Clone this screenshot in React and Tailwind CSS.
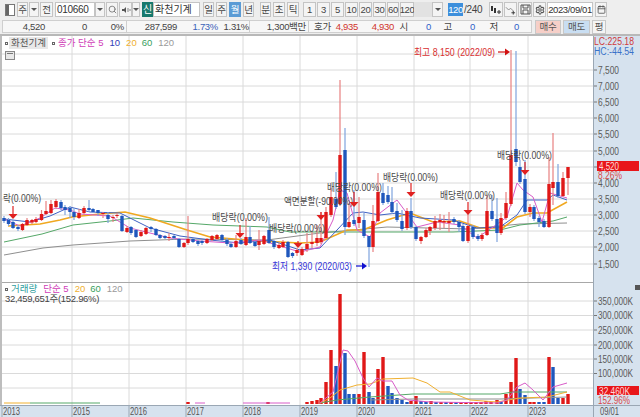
import { Search, Settings, Calendar } from "lucide-react";

const font = { fontFamily: '"Liberation Sans","Noto Sans CJK KR",sans-serif' };

// candles: x, color, wick top, body top, body bottom, wick bottom (page pixels)
const candles = [
  [4, "b", 216, 218, 221, 223], [8.5, "b", 218, 220, 224, 226], [13, "b", 220, 222, 228, 229], [18, "b", 225, 227, 229, 231],
  [22.5, "r", 223, 224, 230, 231], [27, "r", 218, 220, 225, 226], [32, "r", 219, 220, 222.5, 224], [36, "r", 217, 219, 222, 223],
  [41.5, "r", 210, 214, 220, 221], [46, "r", 201, 211, 214, 215], [51, "r", 200, 204, 213, 214], [56, "r", 199, 201, 207, 209],
  [61, "b", 200, 202, 208, 210], [65, "b", 205, 207, 210, 215], [70, "b", 206, 208, 212, 218], [74, "b", 208, 212, 217, 220],
  [79, "r", 209, 213, 218, 219], [84, "r", 206, 208, 213, 215], [89, "b", 200, 208, 210, 212], [93, "b", 208, 209, 212, 213],
  [98, "b", 210, 210, 213, 216], [103, "r", 212, 213, 214, 218], [108, "b", 212, 215, 219, 223], [113, "r", 215, 217, 218, 222],
  [117, "r", 213, 215, 216, 218], [122, "b", 215, 216, 231, 232], [127, "r", 226, 228, 232, 233], [131, "b", 226, 227, 233, 235],
  [136, "b", 229, 230, 237, 238], [141, "r", 230, 232, 236, 237], [146, "r", 227, 228, 234, 235], [151, "b", 226, 227, 229, 232],
  [156, "b", 228, 229, 235, 236], [160, "b", 234, 235, 238, 239], [165, "b", 235, 236, 238, 239], [169, "r", 233, 237, 238, 241],
  [174, "b", 235, 236, 238, 240], [179, "b", 238, 239, 247, 248], [184, "r", 242, 243, 247, 248], [188, "r", 216, 239, 243, 245],
  [193, "b", 238, 239, 242, 243], [198, "b", 240, 241, 244, 246], [202, "b", 240, 241, 243, 245], [207, "r", 238, 239, 243, 244],
  [212, "r", 235, 236, 240, 241], [217, "r", 234, 235, 239, 240], [222, "b", 234, 235, 240, 242], [227, "b", 238, 240, 244, 246],
  [231, "b", 242, 244, 247, 248], [236, "r", 235, 241, 247, 248], [241, "b", 238, 240, 244, 245], [246, "r", 218, 237, 245, 246],
  [250, "b", 226, 237, 243, 244], [255, "b", 241, 242, 246, 247], [259, "r", 230, 241, 245, 250], [264, "r", 235, 236, 244, 245],
  [269, "b", 217, 230, 243, 244], [274, "b", 240, 241, 247, 249], [279, "r", 243, 245, 248, 249], [283, "r", 240, 242, 247, 248],
  [288, "b", 241, 242, 257, 258], [292.5, "b", 252, 253, 256, 258], [297, "r", 248, 250, 253, 256], [302, "r", 247, 249, 255, 256],
  [307, "r", 233, 244, 249, 252], [312, "r", 232, 242, 244, 248], [317, "r", 225, 238, 243, 246], [321, "r", 212, 238, 242, 244],
  [326, "r", 207, 212, 238, 239], [331, "r", 188, 197, 215, 217], [336, "b", 172, 199, 207, 209], [340, "r", 80, 155, 204, 206],
  [345, "b", 128, 150, 227, 235], [349, "r", 203, 222, 227, 228], [354, "b", 190, 220, 224, 226], [359, "r", 197, 217, 223, 228],
  [364, "b", 213, 220, 236, 238], [369, "b", 236, 236, 247, 267], [373, "r", 205, 221, 247, 252], [378, "r", 173, 192, 221, 222],
  [383, "b", 183, 193, 203, 205], [388, "b", 186, 195, 202, 204], [392, "b", 187, 202, 212, 214], [397, "b", 203, 211, 220, 222],
  [402, "b", 210, 221, 229, 231], [407, "r", 208, 211, 228, 230], [411, "b", 198, 211, 227, 229], [416, "b", 226, 227, 239, 241],
  [421, "r", 236, 237, 241, 244], [426, "r", 228, 230, 237, 238], [430, "r", 226, 227, 231, 235], [435, "r", 216, 221, 228, 230],
  [440, "r", 214, 220, 222, 230], [444, "r", 215, 221, 222.5, 228], [449, "r", 212, 221, 223, 232], [454, "b", 217, 219, 222, 224],
  [459, "b", 220, 222, 227, 232], [463, "b", 224, 226, 241, 242], [468, "r", 214, 226, 241, 243], [473, "b", 225, 227, 237, 239],
  [478, "b", 234, 236, 239, 241], [482, "r", 233, 235, 239, 241], [487, "r", 195, 211, 235, 236], [492, "b", 195, 211, 219, 221],
  [497, "b", 198, 219, 233, 242], [501, "r", 213, 218, 233, 235], [506, "r", 192, 203, 218, 220], [511, "r", 50, 155, 204, 206],
  [516, "b", 51, 149, 162, 166], [520, "b", 160, 167, 182, 184], [525, "b", 160, 179, 212, 214], [530, "r", 204, 207, 212, 217],
  [534, "b", 205, 207, 219, 221], [539, "b", 216, 218, 222, 227], [544, "b", 219, 221, 227, 228], [549, "r", 157, 184, 227, 228],
  [553, "r", 133, 182, 188, 205], [558, "b", 164, 182, 196, 198], [563, "r", 172, 178, 196, 197], [568, "r", 167, 167, 178, 195],
];

const lines = [
  { c: "#8f8f8f", p: "4,255 43,248 73,245 130,241 187,239 267,240 320,233 387,227 470,229 520,224 567,223" },
  { c: "#55a868", p: "4,242 42,234 73,225 110,221 133,218 173,222 213,225 267,227 290,232 320,232 387,232 453,232 500,230 520,225 553,221 567,217" },
  { c: "#f0a820", w: 1.6, p: "8,226 40,224 60,220 72,217 100,214 125,212 150,218 187,230 210,237 260,241 300,243 320,242 347,230 363,230 387,220 410,213 433,222 460,221 480,228 503,228 517,217 533,213 547,213 567,202" },
  { c: "#3f62c4", p: "4,219 30,222 50,216 70,207 90,212 120,213 150,228 180,236 210,240 240,243 270,240 300,250 320,248 337,230 353,213 363,212 380,215 397,213 420,218 453,220 477,228 500,227 517,215 527,200 547,200 553,195 567,200" },
  { c: "#d85cc8", p: "4,219 20,226 40,218 55,208 70,210 80,214 110,216 130,228 150,233 170,238 200,241 230,243 260,240 300,252 320,247 333,220 340,190 347,193 357,230 370,237 380,213 397,200 417,227 437,222 460,225 477,238 493,227 507,217 517,183 523,190 533,197 542,222 550,193 567,198" },
];

// volume bars: x, color, bar top
const volume = [
  [188, "r", 402], [268, "r", 402], [307, "r", 402], [312, "r", 401], [317, "r", 400], [321, "r", 398],
  [326, "r", 382], [331, "r", 350], [336, "b", 366], [340, "r", 294], [345, "b", 353], [349, "b", 394], [354, "b", 394],
  [359, "r", 394], [364, "r", 352], [369, "b", 392], [373, "b", 398], [378, "r", 369], [383, "r", 357], [388, "b", 386],
  [392, "b", 393], [397, "b", 398], [402, "b", 400], [407, "b", 402], [411, "r", 401], [416, "r", 396], [421, "b", 401],
  [426, "b", 402], [431, "r", 401], [436, "b", 402], [441, "r", 402], [446, "b", 402], [451, "r", 402], [456, "b", 402],
  [461, "r", 402], [466, "r", 402], [471, "r", 402], [476, "r", 402], [481, "r", 402], [486, "r", 401], [491, "r", 402],
  [497, "r", 400], [501, "b", 402], [506, "r", 394], [511, "r", 382], [516, "r", 358], [520, "b", 389], [525, "b", 395],
  [530, "r", 402], [534, "r", 402], [539, "b", 402], [544, "b", 402], [549, "r", 357], [553, "b", 367], [558, "b", 398],
  [563, "r", 398], [568, "r", 394],
];

const volLines = [
  { c: "#8f8f8f", p: "370,400 413,399 500,399 567,397" },
  { c: "#55a868", p: "320,403 337,400 370,397 413,394 500,394 513,392 567,392" },
  { c: "#55a868", p: "30,403 100,403" },
  { c: "#f0b030", p: "320,403 330,398 340,390 357,385 370,384 383,379 413,378 427,383 440,392 450,392 470,400 497,402 520,398 547,397 567,392" },
  { c: "#f0b030", p: "4,403 30,403" },
  { c: "#d85cc8", p: "320,403 333,392 343,350 348,351 355,361 363,378 369,387 377,378 383,381 392,381 400,395 408,400 430,402 497,403 507,400 517,387 525,383 533,390 543,400 553,387 567,383" },
  { c: "#d85cc8", p: "195,403 205,403" },
  { c: "#d85cc8", p: "243,403 290,403" },
];

const years = [[72, "2015"], [129, "2016"], [186, "2017"], [243, "2018"], [300, "2019"], [357, "2020"], [414, "2021"], [470, "2022"], [528, "2023"]];
const priceTicks = ["7,500", "7,000", "6,500", "6,000", "5,500", "5,000", "4,500", "4,000", "3,500", "3,000", "2,500", "2,000", "1,500"];
const priceY = [70, 86, 102, 118, 134, 151, 167, 183, 199, 215, 231, 247, 264];
const volTicks = [[301, "350,000K"], [315.5, "300,000K"], [330, "250,000K"], [345, "200,000K"], [359, "150,000K"], [373.5, "100,000K"]];
const volGrid = [301, 315.5, 330, 345, 359, 373.5, 388];

const arrows = [[13, 206, 219], [240, 225, 238], [298, 241, 248], [321, 212, 220], [354, 192, 207], [411, 183, 197], [468, 202, 215], [525, 162, 175]];
const divLabels = [
  [212, 221, 56], [269, 232, 56], [327, 191, 55], [383, 181, 55], [440, 199, 55], [497, 159, 55],
];

function Txt({ x, y, w, c = "#4a4a4a", size = 10, children }) {
  return (
    <text x={x} y={y} fill={c} fontSize={size} textLength={w} lengthAdjust="spacingAndGlyphs" style={font}>
      {children}
    </text>
  );
}

function Btn({ w, active, children }) {
  return (
    <div className={`${w} h-[15px] shrink-0 flex items-center justify-center border whitespace-nowrap text-[9.5px] tracking-[-0.4px] leading-none ${active ? "border-[#5b9bd5] bg-[#5b9bd5] text-white" : "border-[#c4c4c4] bg-[#f4f4f4] text-[#444]"}`}>
      {children}
    </div>
  );
}

function Drop({ w = "w-[10px]" }) {
  return (
    <div className={`${w} h-[15px] shrink-0 flex items-center justify-center border border-[#c4c4c4] bg-[#f4f4f4]`}>
      <div className="w-0 h-0 border-x-[3px] border-x-transparent border-t-[3px] border-t-[#555]" />
    </div>
  );
}

function Toolbar() {
  return (
    <div className="h-[19px] shrink-0 flex items-center pl-[5px] bg-[#eeeeee] overflow-hidden" style={font}>
      <div className="w-[10px] h-[12px] mr-[2px] shrink-0 border border-[#777] bg-white flex">
        <div className="w-[3px] bg-[#666]" />
      </div>
      <div className="flex gap-[1px] mr-[2px]">
        <Btn w="w-[11px]">주</Btn>
        <Drop />
        <Btn w="w-[13px]">전</Btn>
      </div>
      <div className="w-[40px] h-[15px] shrink-0 border border-[#c4c4c4] bg-white text-[10px] tracking-[-0.3px] leading-[13px] pl-[1px] text-[#333]">010660</div>
      <Drop />
      <div className="w-[12px] h-[15px] ml-[1px] shrink-0 flex items-center justify-center border border-[#c4c4c4] bg-[#f4f4f4]">
        <Search size={9} color="#666" strokeWidth={2} />
      </div>
      <div className="w-[13px] h-[15px] ml-[1px] shrink-0 flex items-center justify-center border border-[#c4c4c4] bg-[#f4f4f4]">
        <svg width="10" height="10" viewBox="0 0 10 10">
          <path d="M1 4h2l2-2v6L3 6H1z" fill="#555" />
          <path d="M7 3v4M9 4v2" stroke="#888" />
        </svg>
      </div>
      <Drop w="w-[8px]" />
      <div className="w-[11px] h-[15px] ml-[2px] shrink-0 bg-[#17796d] text-white text-[10px] leading-[15px] text-center">신</div>
      <div className="w-[47px] h-[15px] shrink-0 border border-[#c4c4c4] bg-white text-[10px] leading-[13px] pl-[1px] text-[#333] whitespace-nowrap">화천기계</div>
      <div className="flex gap-[2px] ml-[3px]">
        <Btn w="w-[11px]">일</Btn>
        <Btn w="w-[11px]">주</Btn>
        <Btn w="w-[12px]" active>월</Btn>
        <Btn w="w-[11px]">년</Btn>
      </div>
      <div className="flex gap-[2px] ml-[6px]">
        <Btn w="w-[11px]">분</Btn>
        <Btn w="w-[12px]">초</Btn>
        <Btn w="w-[12px]">틱</Btn>
      </div>
      <div className="flex gap-[1px] ml-[4px]">
        <Btn w="w-[13px]">1</Btn>
        <Btn w="w-[13px]">3</Btn>
        <Btn w="w-[13px]">5</Btn>
        <Btn w="w-[13px]">10</Btn>
        <Btn w="w-[13px]">20</Btn>
        <Btn w="w-[13px]">30</Btn>
        <Btn w="w-[12px]">60</Btn>
        <Btn w="w-[14px]">120</Btn>
      </div>
      <div className="w-[18px] h-[15px] shrink-0 bg-[#e2e2e2]" />
      <Drop w="w-[11px]" />
      <div className="w-[15px] h-[13px] ml-[5px] shrink-0 bg-[#3d8fdc] text-white text-[9.5px] tracking-[-0.4px] leading-[13px] text-center">120</div>
      <div className="w-[25px] ml-[1px] shrink-0 text-[10px] tracking-[-0.3px] text-[#444]">/240</div>
      <div className="flex gap-[1px]">
        <Btn w="w-[14px]"><svg width="12" height="10" viewBox="0 0 12 10"><path d="M2 1v5M5 3v5" stroke="#333" strokeWidth="2" /><path d="M9 5v4M7 7h4" stroke="#333" /></svg></Btn>
        <Btn w="w-[13px]"><svg width="12" height="10" viewBox="0 0 12 10"><path d="M1 2l3 3 2-2 3 3" stroke="#888" fill="none" /><path d="M9 6v4M7 8h4" stroke="#333" /></svg></Btn>
        <Btn w="w-[14px]"><svg width="11" height="11" viewBox="0 0 11 11"><path d="M1 1h9v9H1zM3 1v3h5V1M3 10V6h5v4" stroke="#555" fill="none" /></svg></Btn>
        <Btn w="w-[13px]"><Settings size={10} color="#555" strokeWidth={2.5} /></Btn>
      </div>
      <div className="w-[46px] h-[15px] ml-[1px] shrink-0 border border-[#c4c4c4] bg-white text-[9.5px] tracking-[-0.4px] whitespace-nowrap leading-[13px] text-center text-[#333]">2023/09/01</div>
      <div className="w-[12px] h-[15px] ml-[2px] shrink-0 flex items-center justify-center border border-[#c4c4c4] bg-[#f4f4f4]">
        <Calendar size={9} color="#444" strokeWidth={2} />
      </div>
    </div>
  );
}

function Cell({ w, color = "text-[#444]", align = "text-right", children }) {
  return <div className={`${w} shrink-0 whitespace-nowrap ${color} ${align}`}>{children}</div>;
}

function Quote() {
  return (
    <div className="h-[17px] shrink-0 flex items-center bg-[#eeeeee] border-b-2 border-b-[#b8b8b8] text-[9.5px] tracking-[-0.3px] leading-none" style={font}>
      <div className="ml-[2px] w-[530px] h-[13px] shrink-0 flex items-center bg-[#f7f7f7] border border-[#cfcfcf]">
        <Cell w="w-[42px]">4,520</Cell>
        <Cell w="w-[42px]">0</Cell>
        <Cell w="w-[40px] pr-[2px] h-full leading-[11px] border-r border-r-[#cfcfcf]">0%</Cell>
        <Cell w="w-[50px]">287,599</Cell>
        <Cell w="w-[41px]" color="text-[#3a62b8]">1.73%</Cell>
        <Cell w="w-[32px] h-full leading-[11px] border-r border-r-[#cfcfcf]">1.31%</Cell>
        <Cell w="w-[59px] pr-[2px] h-full leading-[11px] border-r border-r-[#cfcfcf]">1,300백만</Cell>
        <Cell w="w-[22px]">호가</Cell>
        <Cell w="w-[27px]" color="text-[#d0342c]">4,935</Cell>
        <Cell w="w-[36px]" color="text-[#d0342c]">4,930</Cell>
        <Cell w="w-[14px]">시</Cell>
        <Cell w="w-[23px]" color="text-[#2f62c8]">0</Cell>
        <Cell w="w-[21px]">고</Cell>
        <Cell w="w-[23px]" color="text-[#2f62c8]">0</Cell>
        <Cell w="w-[23px]">저</Cell>
        <Cell w="w-[21px]" color="text-[#2f62c8]">0</Cell>
      </div>
      <div className="ml-[3px] w-[26px] h-[14px] shrink-0 flex items-center justify-center bg-[#f6cfc8] text-[#555] border border-[#c8c8c8]">매수</div>
      <div className="ml-[2px] w-[27px] h-[14px] shrink-0 flex items-center justify-center bg-[#c9def2] text-[#555] border border-[#c8c8c8]">매도</div>
      <div className="ml-[2px] w-[14px] h-[14px] shrink-0 flex items-center justify-center bg-[#f4f4f4] text-[#555] border border-[#c8c8c8]">평</div>
    </div>
  );
}

function Grid({ ys, top, bottom }) {
  return (
    <g stroke="#dadada" strokeWidth="1">
      {ys.map((y) => <line key={y} x1="2" x2="593" y1={y} y2={y} />)}
      {years.map(([x]) => <line key={x} x1={x} x2={x} y1={top} y2={bottom} />)}
    </g>
  );
}

function PricePane() {
  return (
    <div className="h-[246px] shrink-0 flex relative" style={font}>
      <svg className="w-[593px] h-[246px] bg-white border-l-2 border-l-[#bdbdbd]" viewBox="2 36 591 246">
        <Grid ys={[54, ...priceY]} top={36} bottom={282} />
        {lines.map((l) => (
          <polyline key={l.c} points={l.p} fill="none" stroke={l.c} strokeWidth={l.w || 1} />
        ))}
        {candles.map(([x, k, wt, bt, bb, wb]) => (
          <g key={x}>
            <line x1={x} x2={x} y1={wt} y2={wb} stroke={k === "r" ? "#e88080" : "#7fa3de"} strokeWidth="1.2" />
            <rect x={x - 1.7} y={bt} width="3.4" height={bb - bt} fill={k === "r" ? "#e01818" : "#1f57bd"} />
          </g>
        ))}
        <Txt x={3} y={202} w={38}>락(0.00%)</Txt>
        {divLabels.map(([x, y, w]) => (
          <Txt key={x} x={x} y={y} w={w}>배당락(0.00%)</Txt>
        ))}
        <Txt x={284} y={205} w={69}>액면분할(-90.00%)</Txt>
        {arrows.map(([x, a, b]) => (
          <g key={x}>
            <line x1={x} x2={x} y1={a} y2={b - 3} stroke="#e02020" strokeWidth="1.2" />
            <path d={`M${x - 4.5} ${b - 5}h9l-4.5 5z`} fill="#e02020" />
          </g>
        ))}
        <Txt x={414} y={56} w={81} c="#d83030">최고 8,150 (2022/09)</Txt>
        <line x1="498" x2="506" y1="52" y2="52" stroke="#d01010" strokeWidth="1.2" />
        <path d="M505 48.5l5 3.5-5 3.5z" fill="#d01010" />
        <Txt x={272} y={270} w={80} c="#3636d8">최저 1,390 (2020/03)</Txt>
        <line x1="356" x2="363" y1="266" y2="266" stroke="#1010d0" strokeWidth="1.2" />
        <path d="M362 262.5l5 3.5-5 3.5z" fill="#1010d0" />
      </svg>
      <svg className="w-[47px] h-[246px] bg-[#d6e2ee]" viewBox="593 36 47 246">
        <line x1="593.5" x2="593.5" y1="36" y2="282" stroke="#9aa7b4" />
        {priceTicks.map((t, i) => (
          <g key={t}>
            <line x1="594" x2="597" y1={priceY[i]} y2={priceY[i]} stroke="#777" />
            {t !== "4,500" && <Txt x={598} y={priceY[i] + 3.5} w={21} c="#5a5a5a">{t}</Txt>}
          </g>
        ))}
        <Txt x={594} y={45} w={40} c="#d03a3a">LC:225.18</Txt>
        <Txt x={594} y={54.5} w={40} c="#3a72c8">HC:-44.54</Txt>
        <rect x="597" y="161" width="42" height="10" fill="#e8161a" />
        <Txt x={599} y={169.5} w={20} c="#ffd9d9">4,520</Txt>
        <Txt x={598} y={179} w={24} c="#d84a4a">8.26%</Txt>
      </svg>
      <div className="absolute left-[5px] top-[1px] flex items-center text-[9.5px] leading-[12px]">
        <div className="w-[3px] h-[3px] border border-[#666]" />
        <span className="ml-[1px] px-[2px] bg-[#e8e8e8] text-[#555] w-[39px] whitespace-nowrap">화천기계</span>
        <div className="ml-[4px] w-[3px] h-[3px] border border-[#666]" />
        <span className="ml-[3px] text-[#d040b8] whitespace-nowrap">종가 단순 5</span>
        <span className="ml-[6px] text-[#3040b8]">10</span>
        <span className="ml-[6px] text-[#f0b030]">20</span>
        <span className="ml-[5px] text-[#38a060]">60</span>
        <span className="ml-[6px] text-[#9a9a9a]">120</span>
      </div>
      <div className="absolute left-[5px] top-[15px] w-[10px] h-[9px] border border-[#888] bg-[#e8e8e8]">
        <div className="mt-[1px] mx-[1px] h-[1px] bg-[#777]" />
      </div>
    </div>
  );
}

function VolumePane() {
  return (
    <div className="h-[123px] shrink-0 flex relative" style={font}>
      <svg className="w-[593px] h-[123px] bg-white border-l-2 border-l-[#bdbdbd]" viewBox="2 282 591 123">
        <line x1="2" x2="593" y1="282.5" y2="282.5" stroke="#a8a8a8" />
        <Grid ys={volGrid} top={283} bottom={405} />
        {volume.map(([x, k, t]) => (
          <rect key={x} x={x - 1.7} y={t} width="3.4" height={404 - t} fill={k === "r" ? "#e01818" : "#1f57bd"} />
        ))}
        {volLines.map((l) => (
          <polyline key={l.p} points={l.p} fill="none" stroke={l.c} strokeWidth="1" />
        ))}
      </svg>
      <svg className="w-[47px] h-[123px] bg-[#d6e2ee]" viewBox="593 282 47 123">
        <line x1="593.5" x2="593.5" y1="282" y2="405" stroke="#9aa7b4" />
        {volTicks.map(([y, t]) => (
          <g key={t}>
            <line x1="594" x2="597" y1={y} y2={y} stroke="#777" />
            <Txt x={598} y={y + 3.5} w={35} c="#5a5a5a">{t}</Txt>
          </g>
        ))}
        <rect x="635" y="285" width="5" height="5" fill="#555" />
        <rect x="597" y="386" width="42" height="9" fill="#e8161a" />
        <Txt x={599} y={394.5} w={31} c="#ffd9d9">32,460K</Txt>
        <Txt x={598} y={404} w={32} c="#d84a4a">152.96%</Txt>
      </svg>
      <div className="absolute left-[5px] top-[2px] text-[9.5px] leading-[10px]">
        <div className="flex items-center">
          <div className="w-[3px] h-[3px] border border-[#666]" />
          <span className="ml-[3px] text-[#30a0a0]">거래량</span>
          <span className="ml-[6px] text-[#d040b8] whitespace-nowrap">단순 5</span>
          <span className="ml-[6px] text-[#f0b030]">20</span>
          <span className="ml-[5px] text-[#38a060]">60</span>
          <span className="ml-[6px] text-[#9a9a9a]">120</span>
        </div>
        <div className="text-[9.5px] text-[#444] tracking-[-0.3px] whitespace-nowrap">32,459,651주(152.96%)</div>
      </div>
    </div>
  );
}

function TimeAxis() {
  return (
    <svg className="w-[640px] h-[12px] shrink-0 bg-[#d6e2ee]" viewBox="0 405 640 12">
      <line x1="0" x2="640" y1="405.5" y2="405.5" stroke="#9aa7b4" />
      <line x1="2" x2="2" y1="405" y2="417" stroke="#9aa7b4" />
      <Txt x={3} y={415} w={17} c="#555">2013</Txt>
      {years.map(([x, t]) => (
        <g key={t}>
          <line x1={x} x2={x} y1="405" y2="417" stroke="#9aa7b4" />
          <Txt x={x + 1} y={415} w={17} c="#555">{t}</Txt>
        </g>
      ))}
      <line x1="593.5" x2="593.5" y1="405" y2="417" stroke="#9aa7b4" />
      <Txt x={600} y={415} w={19} c="#555">09/01</Txt>
    </svg>
  );
}

export default function App() {
  return (
    <div className="w-[640px] h-[417px] flex flex-col overflow-hidden bg-[#eeeeee]" style={font}>
      <Toolbar />
      <Quote />
      <PricePane />
      <VolumePane />
      <TimeAxis />
    </div>
  );
}
